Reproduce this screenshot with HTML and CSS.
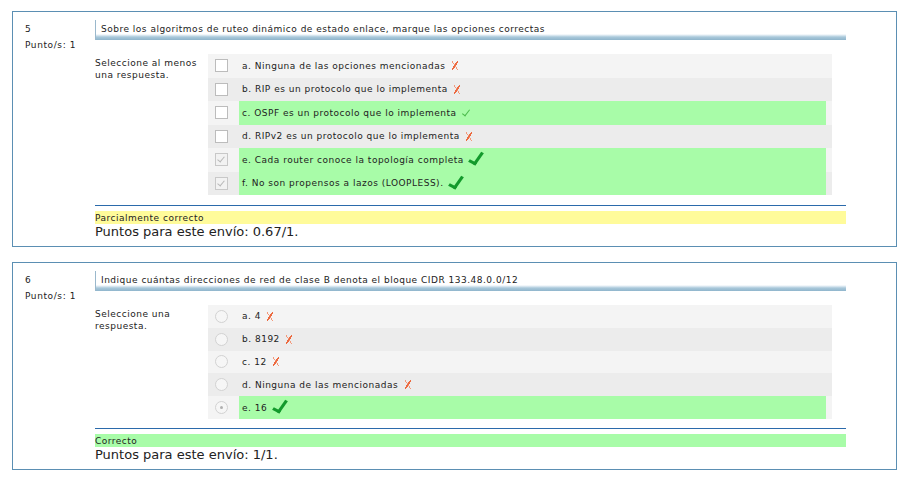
FILE: index.html
```html
<!DOCTYPE html>
<html lang="es">
<head>
<meta charset="utf-8">
<title>Quiz</title>
<link rel="stylesheet" href="styles.css">
</head>
<body>
<div class="que q1">
  <div class="info">
    <div class="no">5</div>
    <div class="grade">Punto/s: 1</div>
  </div>
  <div class="content">
    <div class="qtext">Sobre los algoritmos de ruteo dinámico de estado enlace, marque las opciones correctas</div>
    <div class="ablock">
      <div class="prompt">Seleccione al menos una respuesta.</div>
      <div class="answer">
        <div class="row r0"><span class="ctl"><span class="cbox"></span></span><span class="lbl">a. Ninguna de las opciones mencionadas <span class="ix"></span></span></div>
        <div class="row r1"><span class="ctl"><span class="cbox"></span></span><span class="lbl">b. RIP es un protocolo que lo implementa <span class="ix"></span></span></div>
        <div class="row r0"><span class="ctl"><span class="cbox"></span></span><span class="lbl ok">c. OSPF es un protocolo que lo implementa <span class="ichk"></span></span></div>
        <div class="row r1"><span class="ctl"><span class="cbox"></span></span><span class="lbl">d. RIPv2 es un protocolo que lo implementa <span class="ix"></span></span></div>
        <div class="row r0"><span class="ctl"><span class="cbox on"></span></span><span class="lbl ok">e. Cada router conoce la topología completa <span class="ibig"></span></span></div>
        <div class="row r1"><span class="ctl"><span class="cbox on"></span></span><span class="lbl ok">f. No son propensos a lazos (LOOPLESS). <span class="ibig"></span></span></div>
      </div>
    </div>
    <div class="feedback">
      <div class="state partial">Parcialmente correcto</div>
      <div class="points">Puntos para este envío: 0.67/1.</div>
    </div>
  </div>
</div>
<div class="que q2">
  <div class="info">
    <div class="no">6</div>
    <div class="grade">Punto/s: 1</div>
  </div>
  <div class="content">
    <div class="qtext">Indique cuántas direcciones de red de clase B denota el bloque CIDR 133.48.0.0/12</div>
    <div class="ablock">
      <div class="prompt">Seleccione una respuesta.</div>
      <div class="answer radios">
        <div class="row r0"><span class="ctl"><span class="rad"></span></span><span class="lbl">a. 4 <span class="ix"></span></span></div>
        <div class="row r1"><span class="ctl"><span class="rad"></span></span><span class="lbl">b. 8192 <span class="ix"></span></span></div>
        <div class="row r0"><span class="ctl"><span class="rad"></span></span><span class="lbl">c. 12 <span class="ix"></span></span></div>
        <div class="row r1"><span class="ctl"><span class="rad"></span></span><span class="lbl">d. Ninguna de las mencionadas <span class="ix"></span></span></div>
        <div class="row r0"><span class="ctl"><span class="rad on"></span></span><span class="lbl ok">e. 16 <span class="ibig"></span></span></div>
      </div>
    </div>
    <div class="feedback">
      <div class="state correct">Correcto</div>
      <div class="points">Puntos para este envío: 1/1.</div>
    </div>
  </div>
</div>
</body>
</html>
```
FILE: styles.css
```css
html, body {
  margin: 0;
  padding: 0;
  background: #fff;
}
body {
  font-family: "DejaVu Sans", Verdana, sans-serif;
  font-size: 9px;
  letter-spacing: 0.5px;
  color: #222;
  padding-top: 11px;
}
.que {
  display: flex;
  margin: 0 12px 15px 12px;
  width: 885px;
  border: 1px solid #5b8fb3;
  box-sizing: border-box;
}
.q1 { height: 236px; }
.q2 { height: 208px; }
.info {
  width: 82px;
  padding: 11px 0 0 12px;
  box-sizing: border-box;
  flex: none;
  line-height: 12px;
  letter-spacing: 0.6px;
}
.info .grade { margin-top: 4px; }
.content {
  width: 751px;
  flex: none;
}
.qtext {
  margin-top: 8px;
  height: 20px;
  box-sizing: border-box;
  padding: 3px 6px 0 5px;
  line-height: 12px;
  border-left: 1px solid #9ab8cc;
  background: linear-gradient(to bottom, #fff 0, #fff 14px, #e4eef5 15px, #a9c8da 17px, #8fb5cc 20px);
}
.ablock {
  display: flex;
  margin-top: 14px;
}
.prompt {
  width: 113px;
  flex: none;
  padding-top: 3px;
  line-height: 12px;
  box-sizing: border-box;
  padding-right: 6px;
}
.answer {
  width: 624px;
  flex: none;
}
.row {
  display: flex;
  height: 23.5px;
  padding-right: 6px;
}
.radios .row { height: 22.8px; }
.r0 { background: #f4f4f4; }
.r1 { background: #ececec; }
.ctl {
  width: 31px;
  flex: none;
  display: flex;
  align-items: center;
  justify-content: center;
}
.lbl {
  flex: 1;
  display: flex;
  align-items: center;
  padding-left: 3px;
  white-space: pre;
}
.lbl.ok { background: #a8fca8; }
.cbox {
  width: 11px;
  height: 11px;
  border: 1px solid #bcbcbc;
  background: #fff;
  position: relative;
  margin-left: -5px;
}
.cbox.on {
  background: #f2f2f2;
  border-color: #c8c8c8;
}
.cbox.on::after {
  content: "";
  position: absolute;
  left: 3px;
  top: 1px;
  width: 3px;
  height: 6px;
  border: solid #b8b8b8;
  border-width: 0 1.5px 1.5px 0;
  transform: rotate(40deg);
}
.rad {
  width: 11px;
  height: 11px;
  border: 1px solid #d2d2d2;
  border-radius: 50%;
  background: #f6f6f6;
  position: relative;
  margin-left: -5px;
}
.rad.on::after {
  content: "";
  position: absolute;
  left: 4px;
  top: 4px;
  width: 3px;
  height: 3px;
  border-radius: 50%;
  background: #b0b0b0;
}
.ix {
  display: inline-block;
  width: 6px;
  height: 9px;
  margin-left: 3px;
  background:
    linear-gradient(to bottom right, transparent 42%, #ec6a40 42%, #ec6a40 58%, transparent 58%),
    linear-gradient(to bottom left, transparent 46%, #f4987a 46%, #f4987a 56%, transparent 56%);
}
.ichk {
  display: inline-block;
  width: 3px;
  height: 7px;
  margin-left: 4px;
  margin-top: -2px;
  border: solid #4cbb4c;
  border-width: 0 1.5px 1.5px 0;
  transform: rotate(38deg);
}
.ibig {
  display: inline-block;
  width: 5px;
  height: 12px;
  margin-left: 5px;
  margin-top: -4px;
  border: solid #139a2c;
  border-width: 0 3px 3px 0;
  transform: rotate(35deg) skewY(-8deg);
}
.feedback {
  margin-top: 10px;
  border-top: 1px solid #2b6aab;
}
.q2 .feedback { margin-top: 9px; }
.state {
  margin-top: 5px;
  height: 13px;
  line-height: 14px;
}
.partial { background: #fffb9a; }
.correct { background: #a8fca8; }
.points {
  font-size: 13px;
  letter-spacing: 0;
  line-height: 15px;
  color: #222;
}
```
